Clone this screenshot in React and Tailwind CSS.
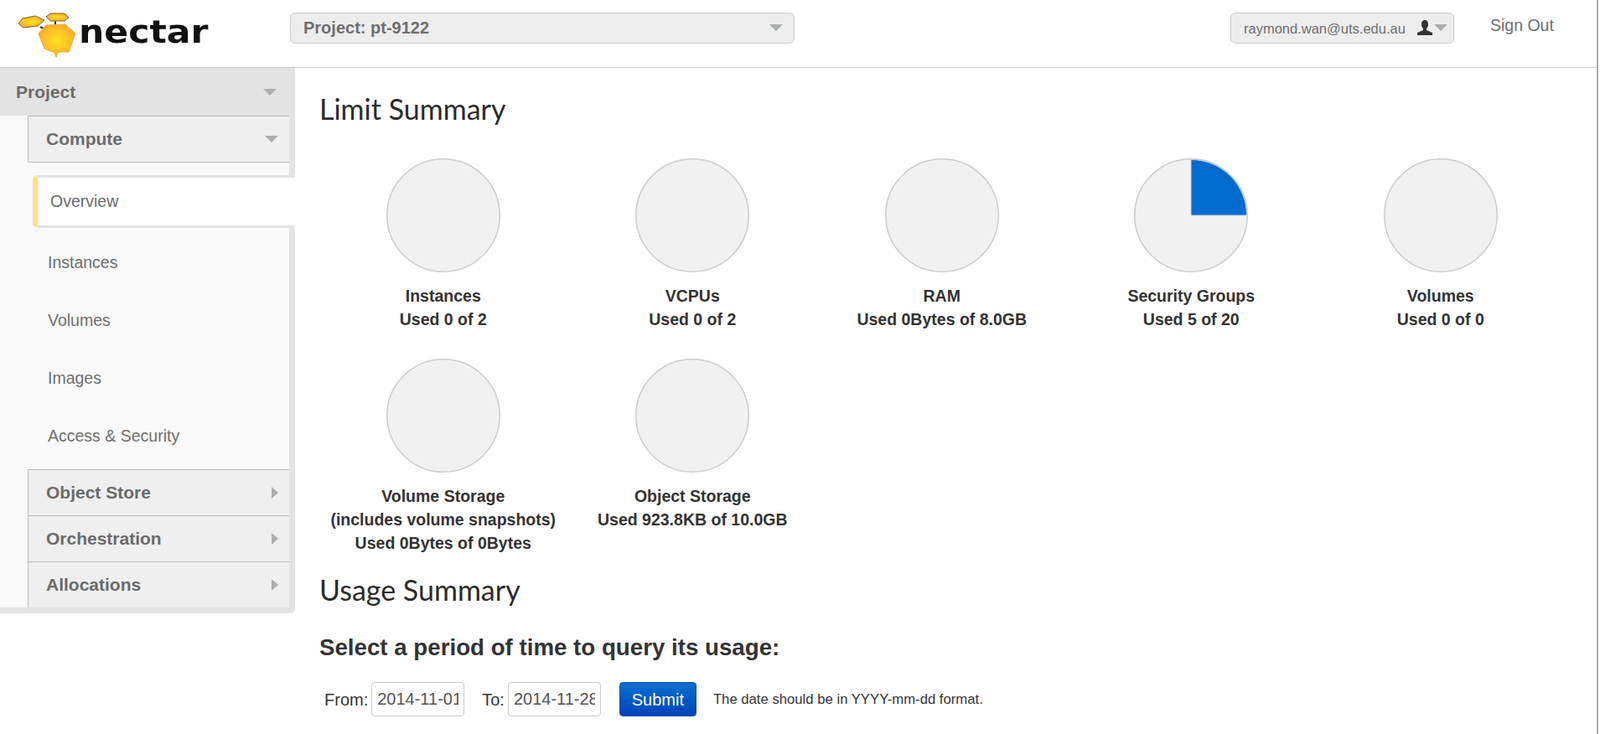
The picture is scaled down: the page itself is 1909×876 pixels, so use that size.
const Arrow = ({ dir = "down", className = "" }) =>
  dir === "down" ? (
    <span className={`w-0 h-0 border-x-[8px] border-x-transparent border-t-[8px] border-t-[#aaaeb0] ${className}`} />
  ) : (
    <span className={`w-0 h-0 border-y-[7px] border-y-transparent border-l-[8px] border-l-[#aaaeb0] ${className}`} />
  );

const limits = [
  { lines: ["Instances", "Used 0 of 2"] },
  { lines: ["VCPUs", "Used 0 of 2"] },
  { lines: ["RAM", "Used 0Bytes of 8.0GB"] },
  { lines: ["Security Groups", "Used 5 of 20"], used: true },
  { lines: ["Volumes", "Used 0 of 0"] },
  { lines: ["Volume Storage", "(includes volume snapshots)", "Used 0Bytes of 0Bytes"] },
  { lines: ["Object Storage", "Used 923.8KB of 10.0GB"] },
];

const Pie = ({ used }) => (
  <svg width="136" height="136" viewBox="0 0 136 136" className="block mx-auto">
    <circle cx="68" cy="68" r="67.25" fill="#f1f1f1" stroke="#cccccc" strokeWidth="1.5" />
    {used && <path d="M68 68V1.5A66.5 66.5 0 0 1 134.500 68Z" fill="#006ccf" stroke="#cccccc" strokeWidth="1" />}
  </svg>
);

const Logo = () => (
  <div className="flex items-center w-[346px] pl-[22px]">
    <svg width="72" height="56" viewBox="0 0 72 56" className="shrink-0 mt-[16px]">
      <defs>
        <radialGradient id="honey" cx="0.5" cy="0.5" r="0.6">
          <stop offset="0" stopColor="#ffe21f" />
          <stop offset="1" stopColor="#f8a52a" />
        </radialGradient>
      </defs>
      <path d="M26 19L30 21M44 12L44 16" stroke="#333" strokeWidth="2" />
      <path d="M0 15L5 9L20 6L31 11L23 18L6 20Z" fill="url(#honey)" stroke="#7a6230" strokeWidth="1" />
      <path d="M33 7L38 3L55 3L60 8L55 12L38 12Z" fill="url(#honey)" stroke="#7a6230" strokeWidth="1" />
      <path d="M24 27L33 17L56 16L68 27L60 49L50 49L47 50L45 55L43 50L31 45Z" fill="url(#honey)" stroke="#e8ad40" strokeWidth="1" />
    </svg>
    <span className="font-['DejaVu_Sans'] font-bold text-[38px] leading-none text-[#111] origin-left scale-x-[1.12] mt-[10px] blur-[0.4px]">nectar</span>
  </div>
);

const SubHead = ({ label, open }) => (
  <div className="flex items-center justify-between h-[55px] pl-[21px] pr-[13px] bg-[#efefef] border-l border-t border-[#bbb] text-[21px] font-bold text-[#6b6b6b]">
    {label}
    <Arrow dir={open ? "down" : "right"} />
  </div>
);

const Sidebar = () => (
  <aside className="w-[352px] h-[651px] shrink-0 bg-[#f9f9f9] border-r-[7px] border-b-[7px] border-[#e3e3e3] rounded-br-md">
    <div className="flex items-center justify-between h-[57px] pl-[19px] pr-[22px] -mr-[7px] bg-[#e3e3e3] text-[21px] font-bold text-[#6b6b6b]">
      Project
      <Arrow />
    </div>
    <div className="ml-[33px]">
      <div className="border-b border-[#bbb]">
        <SubHead label="Compute" open />
      </div>
      <div className="h-[366px] pt-[15px]">
        <div className="flex items-center h-[63px] ml-[6px] -mr-[7px] pl-[15px] bg-white border-l-[6px] border-l-[#fddf8c] border-y-[3px] border-y-[#e3e3e3] rounded-l-md text-[19.5px] text-[#6b6b6b]">
          Overview
        </div>
        <ul className="pl-[24px] text-[19.5px] text-[#6f6f6f]">
          <li className="mt-[20px] leading-[43px]">Instances</li>
          <li className="mt-[26px] leading-[43px]">Volumes</li>
          <li className="mt-[26px] leading-[43px]">Images</li>
          <li className="mt-[26px] leading-[43px]">Access &amp; Security</li>
        </ul>
      </div>
      <SubHead label="Object Store" />
      <SubHead label="Orchestration" />
      <SubHead label="Allocations" />
    </div>
  </aside>
);

const Field = ({ label, value, className }) => (
  <label className={`flex items-center gap-[4px] text-[20px] text-[#333] ${className}`}>
    {label}
    <input
      readOnly
      value={value}
      className="w-[111px] h-[41px] px-[6px] bg-white border border-[#ccc] rounded-[4px] text-[20px] text-[#555] font-['Liberation_Sans',sans-serif]"
    />
  </label>
);

export default function App() {
  return (
    <div className="relative w-[1909px] h-[876px] overflow-hidden bg-white font-['Liberation_Sans',sans-serif]">
      <header className="flex items-center h-[81px] pb-[14px] border-b border-[#ccc]">
        <Logo />
        <div className="flex items-center justify-between w-[602px] h-[37px] pl-[15px] pr-[13px] bg-[#ededed] border border-[#ccc] rounded-md text-[20px] font-bold text-[#6f6f6f]">
          Project: pt-9122
          <Arrow />
        </div>
        <div className="flex items-center w-[267px] h-[37px] ml-[520px] pl-[15px] bg-[#ededed] border border-[#ccc] rounded-md text-[16.5px] text-[#6f6f6f]">
          <span className="mt-[3px]">raymond.wan@uts.edu.au</span>
          <svg width="20" height="20" viewBox="0 0 20 20" className="ml-[13px]" fill="#333">
            <path d="M10 1C7 1 6 3.500 6 6C6 8.500 7 10 8 11V13L1 16V19H19V16L12 13V11C13 10 14 8.500 14 6C14 3.500 13 1 10 1Z" />
          </svg>
          <Arrow className="ml-[1px]" />
        </div>
        <span className="ml-[43px] -mt-[4px] text-[19.5px] text-[#6f6f6f]">Sign Out</span>
      </header>
      <div className="flex">
        <Sidebar />
        <main className="pl-[29px] flex-1 text-[#333]">
          <h2 className="mt-[29px] font-['Lato',sans-serif] text-[34px] leading-[40px] text-[#2b2b2b]">Limit Summary</h2>
          <div className="grid grid-cols-[repeat(5,297.500px)] mt-[39px] -ml-[1px] auto-rows-max gap-y-[33px]">
            {limits.map((l) => (
              <div key={l.lines[0]} className="text-center text-[19.5px] font-bold leading-[28px]">
                <Pie used={l.used} />
                <div className="mt-[14px]">
                  {l.lines.map((t) => <div key={t}>{t}</div>)}
                </div>
              </div>
            ))}
          </div>
          <h2 className="mt-[22px] font-['Lato',sans-serif] text-[34px] leading-[40px] text-[#2b2b2b]">Usage Summary</h2>
          <h3 className="mt-[34px] text-[27.700px] font-bold leading-[30px]">Select a period of time to query its usage:</h3>
          <div className="flex items-center mt-[26px] pl-[6px]">
            <Field label="From:" value="2014-11-01" />
            <Field label="To:" value="2014-11-28" className="ml-[21px]" />
            <button className="ml-[22px] w-[92px] h-[41px] rounded-[4px] border border-[#0a4fa8] bg-gradient-to-b from-[#0a6fd0] to-[#0044bb] text-white text-[20px]">Submit</button>
            <span className="ml-[20px] text-[16.700px] text-[#333]">The date should be in YYYY-mm-dd format.</span>
          </div>
        </main>
      </div>
      <div className="absolute top-0 right-0 bottom-0 w-[4px] bg-white border-l-2 border-[#aaa]" />
    </div>
  );
}
